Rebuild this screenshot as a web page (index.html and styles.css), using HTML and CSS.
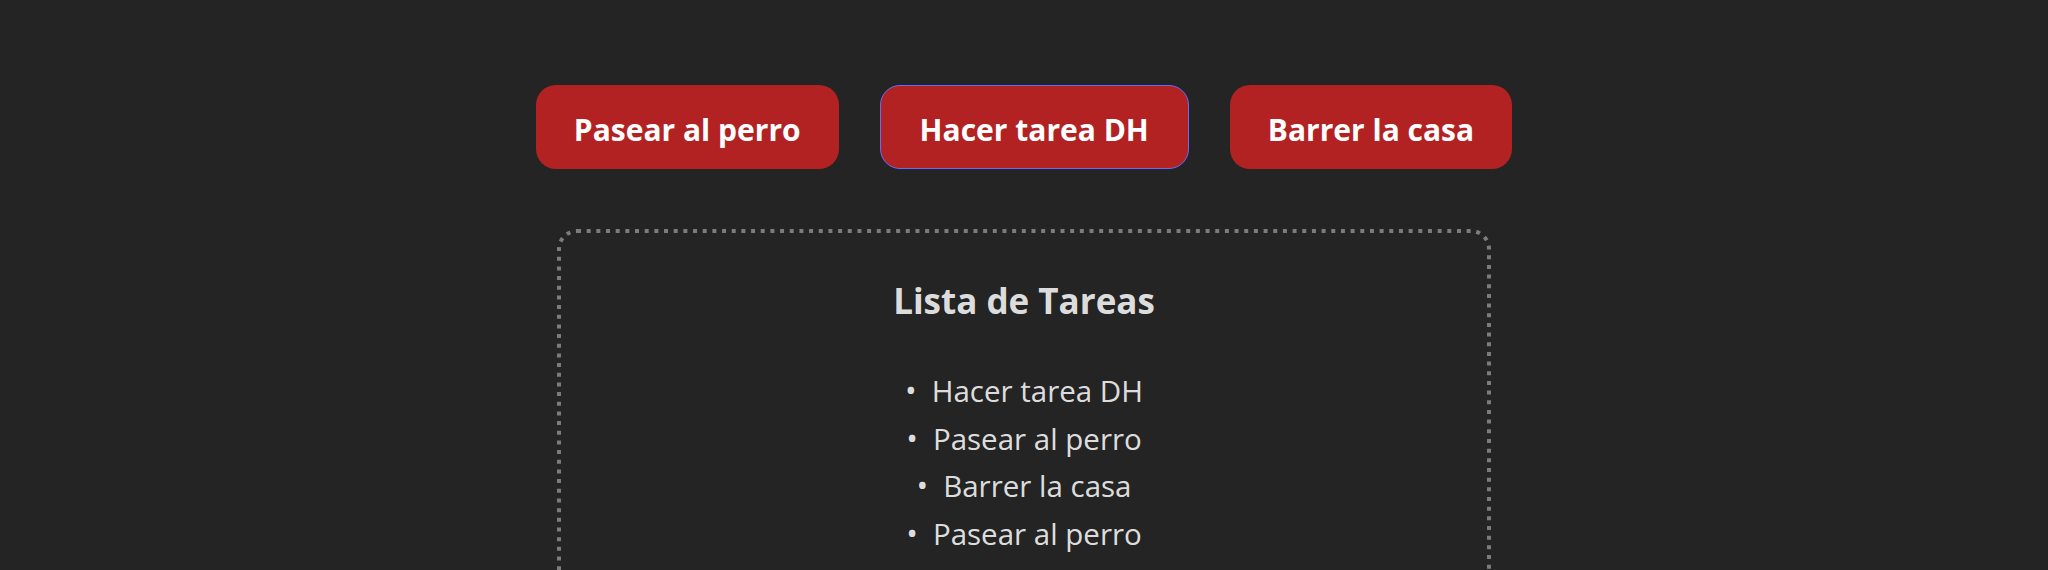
FILE: index.html
```html
<!DOCTYPE html>
<html lang="es">
<head>
<meta charset="utf-8">
<title>Lista de Tareas</title>
<link rel="stylesheet" href="styles.css">
</head>
<body>
<div class="app">
  <div class="buttons">
    <button class="task-btn">Pasear al perro</button>
    <button class="task-btn is-focused">Hacer tarea DH</button>
    <button class="task-btn">Barrer la casa</button>
  </div>
  <section class="list-box">
    <svg class="list-frame" aria-hidden="true"><rect class="list-frame-rect" x="0" y="0" width="100%" height="100%" rx="18" ry="18"></rect></svg>
    <h2 class="list-title">Lista de Tareas</h2>
    <ul class="task-list">
      <li>Hacer tarea DH</li>
      <li>Pasear al perro</li>
      <li>Barrer la casa</li>
      <li>Pasear al perro</li>
    </ul>
  </section>
</div>
</body>
</html>
```

FILE: styles.css
```css
html, body {
  margin: 0;
  padding: 0;
  background: #242424;
}

body {
  font-family: "Open Sans", "Noto Sans", sans-serif;
  color: rgba(255, 255, 255, 0.87);
  height: 570px;
  overflow: hidden;
}

.app {
  display: flex;
  flex-direction: column;
  align-items: center;
}

.buttons {
  display: flex;
  gap: 41px;
  margin-top: 85px;
}

.task-btn {
  font-family: "Open Sans", "Noto Sans", sans-serif;
  font-weight: 700;
  font-size: 30px;
  line-height: 52px;
  padding: 18px 37px 12px;
  border: 1px solid transparent;
  border-radius: 20px;
  background: #b22222;
  color: #ffffff;
  cursor: pointer;
}

.task-btn.is-focused {
  border-color: #646cff;
  padding-left: 39px;
  padding-right: 39px;
}

.list-box {
  position: relative;
  box-sizing: border-box;
  width: 934px;
  min-height: 420px;
  margin-top: 60px;
  border: 4px solid transparent;
  padding: 45px 20px 40px;
  text-align: center;
}

.list-frame {
  position: absolute;
  top: -2px;
  left: -2px;
  width: calc(100% + 4px);
  height: calc(100% + 4px);
  overflow: visible;
  pointer-events: none;
}

.list-frame-rect {
  fill: none;
  stroke: #7c7c7c;
  stroke-width: 4;
  stroke-dasharray: 4 5.67;
}

.list-title {
  margin: 0;
  font-size: 35px;
  font-weight: 700;
  line-height: 46px;
}

.task-list {
  margin: 43px 0 0;
  padding: 0;
  list-style: none;
  font-size: 29.5px;
  line-height: 47.7px;
}

.task-list li::before {
  content: "\2022";
  margin-right: 15px;
  font-size: 31px;
  line-height: 1;
}
```
